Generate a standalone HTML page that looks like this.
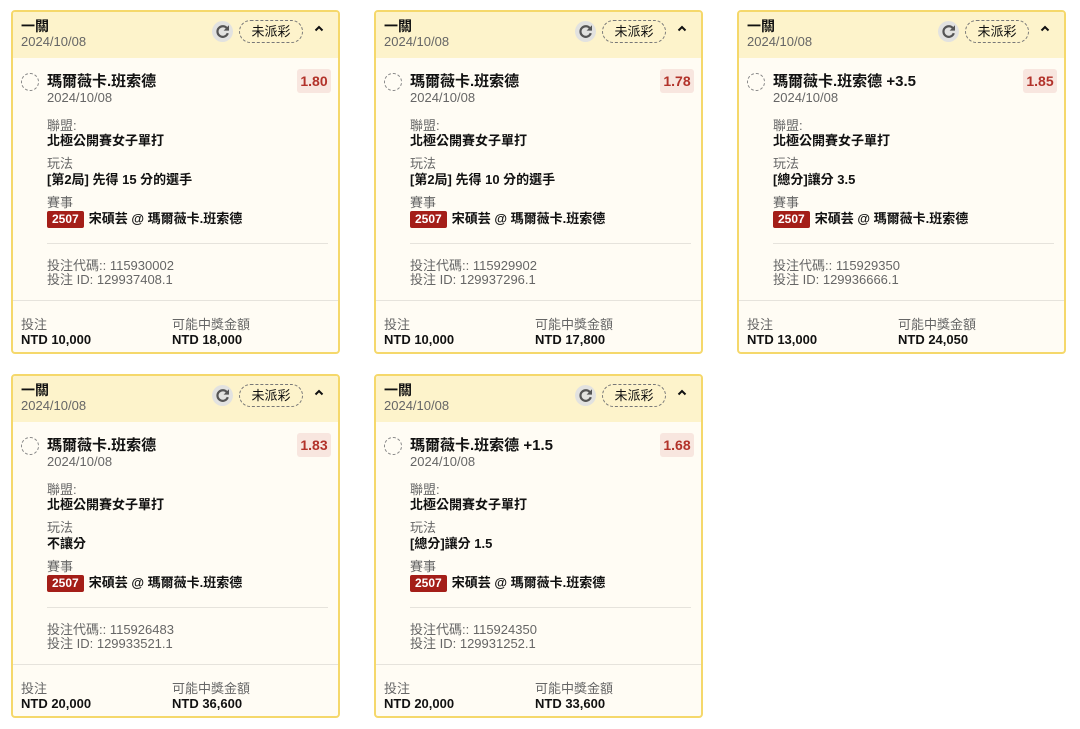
<!DOCTYPE html>
<html><head><meta charset="utf-8"><style>
*{margin:0;padding:0;box-sizing:border-box}
body{width:1080px;height:729px;background:#fff;font-family:"Liberation Sans","Noto Sans CJK TC",sans-serif;color:#111;position:relative;overflow:hidden}
.card{position:absolute;width:329px;height:344px;border:2px solid #f5d86b;border-radius:4px;background:#fffcf4;overflow:hidden}
.hd{position:absolute;left:0;top:0;right:0;height:46px;background:#fdf3cb}
.t{position:absolute;font-size:13px;line-height:16px;white-space:nowrap}
.b{font-weight:bold;color:#111}
.g{color:#666}
.ic{position:absolute;left:199px;top:9px;width:21px;height:21px;border-radius:50%;background:#e2e2e0}
.pill{position:absolute;left:226px;top:8px;width:64px;height:23px;border:1px dashed #777;border-radius:12px;font-size:13px;text-align:center;line-height:21px;color:#111}
.car{position:absolute;left:301px;top:13px;line-height:0}
.circ{position:absolute;left:8px;top:61px;width:18px;height:18px;border:1px dashed #888;border-radius:50%}
.odds{position:absolute;left:284px;top:57px;width:34px;height:24px;background:#f8e6df;border-radius:3px;color:#b2322a;font-size:14px;font-weight:bold;text-align:center;line-height:24px}
.badge{display:inline-block;background:#a41e18;color:#fff;font-weight:bold;font-size:12px;padding:0 5px;height:17px;line-height:17px;border-radius:2px;margin-right:5px;vertical-align:top}
.sep{position:absolute;left:34px;right:10px;top:231px;height:1px;background:#e6e3dc}
.fsep{position:absolute;left:0;right:0;top:288px;height:1px;background:#e6e3dc}
</style></head><body>
<div id="c"></div>
<script>
var d=[
[11,10,"瑪爾薇卡.班索德","1.80","[第2局] 先得 15 分的選手","115930002","129937408.1","10,000","18,000"],
[374,10,"瑪爾薇卡.班索德","1.78","[第2局] 先得 10 分的選手","115929902","129937296.1","10,000","17,800"],
[737,10,"瑪爾薇卡.班索德 +3.5","1.85","[總分]讓分 3.5","115929350","129936666.1","13,000","24,050"],
[11,374,"瑪爾薇卡.班索德","1.83","不讓分","115926483","129933521.1","20,000","36,600"],
[374,374,"瑪爾薇卡.班索德 +1.5","1.68","[總分]讓分 1.5","115924350","129931252.1","20,000","33,600"]];
var h="";
d.forEach(function(a){
h+='<div class="card" style="left:'+a[0]+'px;top:'+a[1]+'px">'+
'<div class="hd"></div>'+
'<div class="t b" style="left:8px;top:6px;font-size:14px">一關</div>'+
'<div class="t g" style="left:8px;top:22px">2024/10/08</div>'+
'<div class="ic"><svg width="21" height="21" viewBox="0 0 21 21"><path d="M15.2 7.6A5.3 5.3 0 1 0 15.8 12.2" fill="none" stroke="#555" stroke-width="2.2"/><path d="M17 4.2V9.6h-5.4z" fill="#555"/></svg></div>'+
'<div class="pill">未派彩</div><div class="car"><svg width="10" height="7" viewBox="0 0 10 7"><path d="M1.5 5.5L5 2l3.5 3.5" fill="none" stroke="#111" stroke-width="2"/></svg></div>'+
'<div class="circ"></div>'+
'<div class="t b" style="left:34px;top:61px;font-size:15px;line-height:18px">'+a[2]+'</div>'+
'<div class="odds">'+a[3]+'</div>'+
'<div class="t g" style="left:34px;top:78px">2024/10/08</div>'+
'<div class="t g" style="left:34px;top:106px">聯盟:</div>'+
'<div class="t b" style="left:34px;top:121px">北極公開賽女子單打</div>'+
'<div class="t g" style="left:34px;top:144px">玩法</div>'+
'<div class="t b" style="left:34px;top:160px">'+a[4]+'</div>'+
'<div class="t g" style="left:34px;top:183px">賽事</div>'+
'<div class="t b" style="left:34px;top:199px"><span class="badge">2507</span>宋碩芸 @ 瑪爾薇卡.班索德</div>'+
'<div class="sep"></div>'+
'<div class="t g" style="left:34px;top:246px">投注代碼:: '+a[5]+'</div>'+
'<div class="t g" style="left:34px;top:260px">投注 ID: '+a[6]+'</div>'+
'<div class="fsep"></div>'+
'<div class="t g" style="left:8px;top:305px">投注</div>'+
'<div class="t b" style="left:8px;top:320px">NTD '+a[7]+'</div>'+
'<div class="t g" style="left:159px;top:305px">可能中獎金額</div>'+
'<div class="t b" style="left:159px;top:320px">NTD '+a[8]+'</div>'+
'</div>';});
document.getElementById("c").innerHTML=h;
</script>
</body></html>
